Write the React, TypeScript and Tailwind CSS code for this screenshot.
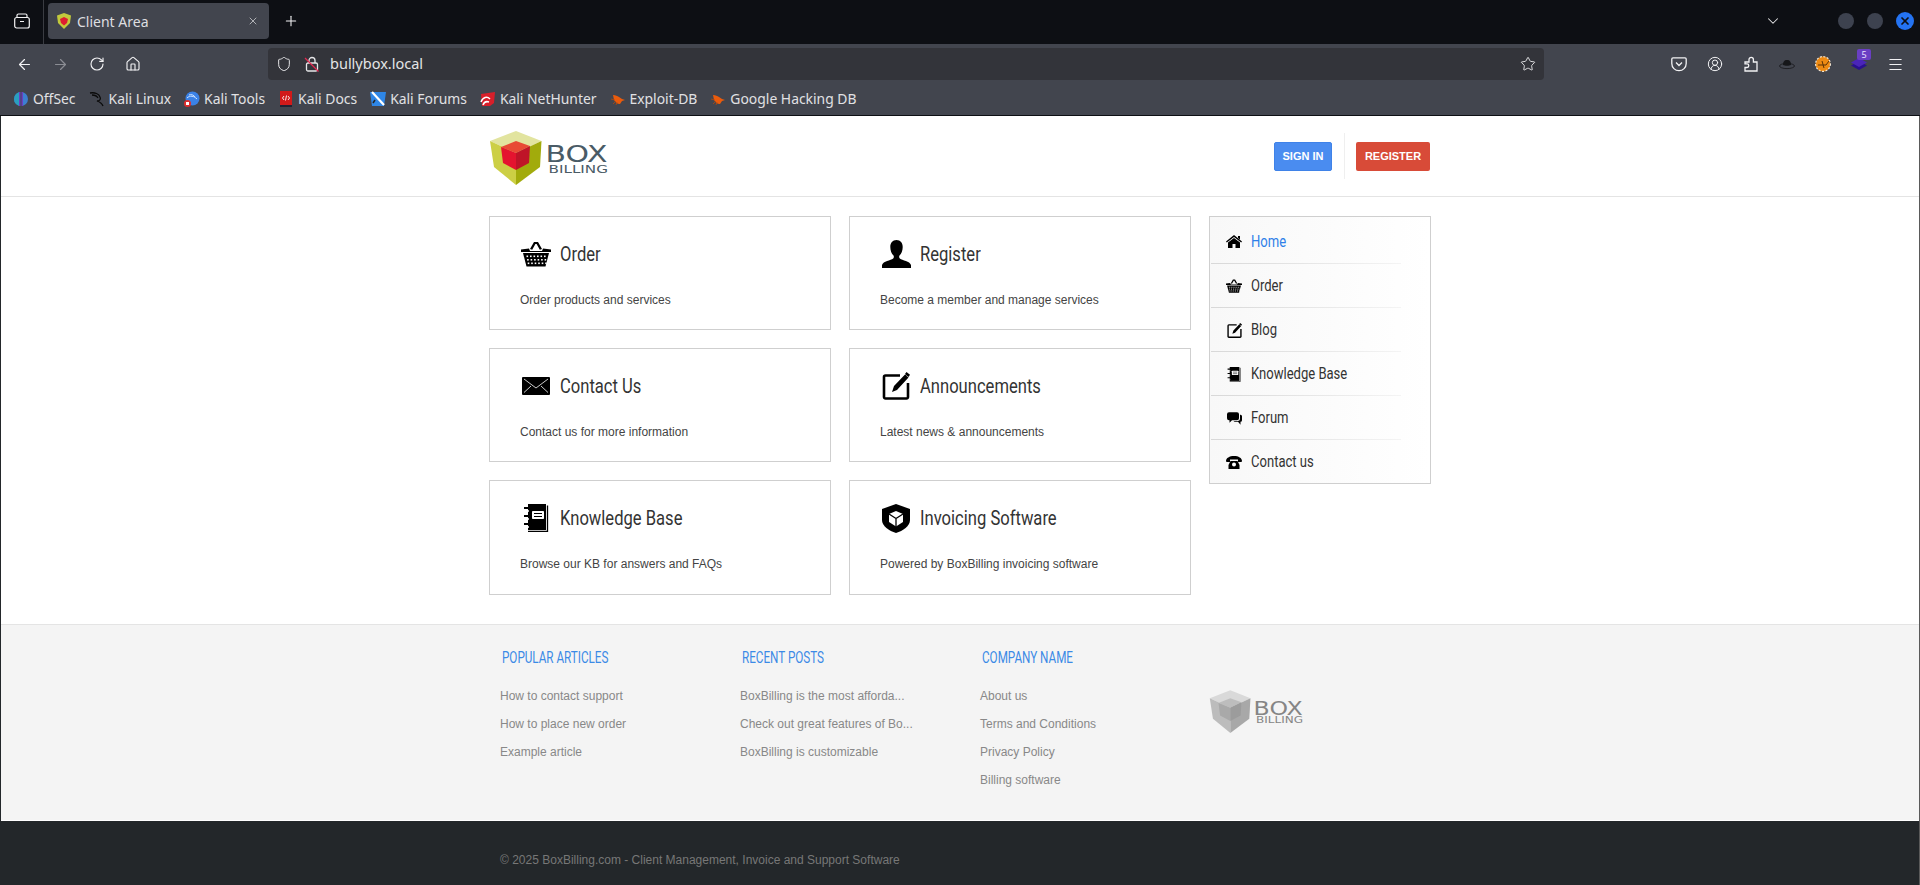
import React from "react";
import { ArrowLeft, ArrowRight, RotateCw, Home, Shield, Plus, X, ChevronDown, Star, Menu, CircleUserRound } from "lucide-react";

const UI = "font-['Noto_Sans','Open_Sans',sans-serif]";
const ARIAL = "font-['Liberation_Sans',Arial,sans-serif]";
const NARROW = "font-['Roboto',sans-serif] inline-block origin-left whitespace-nowrap";

function Logo({ grey, className }: { grey?: boolean; className: string }) {
  const c = grey
    ? { t: "#d9d9d9", l: "#bcbcbc", r: "#a8a8a8", it: "#bdbdbd", il: "#a9a9a9", ir: "#9c9c9c", x: "#858585" }
    : { t: "#e2e49f", l: "#cccf45", r: "#a2ab0c", it: "#e84a35", il: "#e4142f", ir: "#bf1428", x: "#4a5b66" };
  return (
    <svg viewBox="9 11 119 55" className={className}>
      <path d="M36 11 61.5 21 36 33 10 21Z" fill={c.t} />
      <path d="M10 21 36 33V65L14 47Z" fill={c.l} />
      <path d="M61.5 21 60 47 36 65V33Z" fill={c.r} />
      <path d="M36 21 50 26 36 33 21 27Z" fill={c.it} />
      <path d="M21 27 36 33V50L23 43Z" fill={c.il} />
      <path d="M50 26 49 43 36 50V33Z" fill={c.ir} />
      <text x="65.500" y="42" fontFamily="'DejaVu Sans',sans-serif" fontSize="23.5" fill={c.x} textLength="62" lengthAdjust="spacingAndGlyphs">BOX</text>
      <text x="68.500" y="52.500" fontFamily="'DejaVu Sans',sans-serif" fontSize="11" fill={c.x} textLength="59.500" lengthAdjust="spacingAndGlyphs">BILLING</text>
    </svg>
  );
}

function Basket({ className }: { className: string }) {
  return (
    <svg viewBox="0 0 30 26" className={className}>
      <path d="M9 8 13 1h4l4 7-2.2.8L15.6 3h-1.2L11.2 8.8Z" fill="#000" />
      <path d="M0 8.5 8 7.5 9 10h12l1-2.500 8 1V11H0Z" fill="#000" />
      <path d="M2 12h26l-3.500 13.500H5.500Z" fill="#000" />
      <g fill="#fff">
        {[14.5, 18, 21.5].map((y, r) =>
          [5.5, 9, 12.5, 16, 19.500, 23].map((x, i) => <rect key={`${r}${i}`} x={x + r * 0.6} y={y} width="1.6" height="1.600" />)
        )}
      </g>
    </svg>
  );
}
function Person({ className }: { className: string }) {
  return (
    <svg viewBox="0 0 29 28" className={className}>
      <path d="M14.500 0c4 0 6.200 3 6.200 7 0 3.500-1.300 6.800-3.200 8.500-.5.600-.5 2.200.3 3 2.500 2 10 2.500 11.200 6.500V28H0v-3c1.200-4 8.700-4.500 11.200-6.500.8-.8.8-2.400.3-3C9.600 13.800 8.300 10.500 8.300 7c0-4 2.200-7 6.200-7Z" fill="#000" />
    </svg>
  );
}
function Mail({ className }: { className: string }) {
  return (
    <svg viewBox="0 0 28 18" className={className}>
      <path d="M1 0h26a1 1 0 0 1 1 1v16a1 1 0 0 1-1 1H1a1 1 0 0 1-1-1V1a1 1 0 0 1 1-1Z" fill="#000" />
      <path d="M2 2 14 11 26 2M2 15.500 9 9M26 15.500 19 9" fill="none" stroke="#fff" strokeWidth=".8" />
    </svg>
  );
}
function Edit({ className }: { className: string }) {
  return (
    <svg viewBox="0 0 28 28" className={className}>
      <path d="M18 3.500H3.500A1.500 1.500 0 0 0 2 5v20a1.500 1.500 0 0 0 1.500 1.500h21A1.500 1.500 0 0 0 26 25V11" fill="none" stroke="#000" strokeWidth="2.600" />
      <path d="M10 20 12 14 23 2.500l2 1-1 .0 2.500 2L15 18Z" fill="#000" />
      <path d="M24.500 0 28 2.800 26.500 5 23 2Z" fill="#000" />
    </svg>
  );
}
function Notebook({ className }: { className: string }) {
  return (
    <svg viewBox="0 0 26 28" className={className}>
      <path d="M5 0h18v26H5Z" fill="#000" />
      <path d="M24.500 1.500V27.500H5" fill="none" stroke="#000" strokeWidth="1.300" />
      <rect x="9" y="7" width="12" height="8" rx=".8" fill="#fff" />
      <path d="M11 9.500h8M11 12.500h8" stroke="#000" strokeWidth="1" />
      <path d="M1 4h5M1 12h5M1 20h5" stroke="#000" strokeWidth="2" />
      <path d="M5 7h1M5 15h1M5 23h1" stroke="#fff" strokeWidth="1.500" />
    </svg>
  );
}
function ShieldCube({ className }: { className: string }) {
  return (
    <svg viewBox="0 0 28 29" className={className}>
      <path d="M14 0 28 5v11c0 6-7 11-14 13C7 27 0 22 0 16V5Z" fill="#000" />
      <path d="M14 7 21 10v8l-7 4.500L7 18v-8Z" fill="#fff" />
      <path d="M14 14.500 7 10M14 14.500l7-4.500M14 14.500V23" stroke="#000" strokeWidth="1.300" fill="none" />
    </svg>
  );
}
function HomeGlyph({ className }: { className: string }) {
  return (
    <svg viewBox="0 0 16 13" className={className}>
      <path d="M8 0 16 6.500l-.8 1L8 2 .8 7.500 0 6.500Z" fill="#000" />
      <path d="M12 1h2v3.500l-2-1.500Z" fill="#000" />
      <path d="M8 3 14 7.500V13H9.500V9h-3v4H2V7.500Z" fill="#000" />
    </svg>
  );
}
function Chat({ className }: { className: string }) {
  return (
    <svg viewBox="0 0 15 12.500" className={className}>
      <path d="M2 0h8a2 2 0 0 1 2 2v4a2 2 0 0 1-2 2H5L2.500 10.500V8H2a2 2 0 0 1-2-2V2a2 2 0 0 1 2-2Z" fill="#000" />
      <path d="M13 2.500h.5a1.500 1.500 0 0 1 1.500 1.500v4a1.500 1.500 0 0 1-1.500 1.500h0v3L11 9.500H6.500l1-.7h3a2.500 2.500 0 0 0 2.500-2.500Z" fill="#000" />
    </svg>
  );
}
function Phone({ className }: { className: string }) {
  return (
    <svg viewBox="0 0 16 13" className={className}>
      <path d="M0 5C0 2 3.500 0 8 0s8 2 8 5l-.5 1H12V3.500H4V6H.5Z" fill="#000" />
      <path d="M4.500 5h7l2 4v4h-11V9Z" fill="#000" />
      <circle cx="8" cy="8.500" r="2" fill="#fff" />
    </svg>
  );
}

const Bug = () => (
  <svg viewBox="0 0 16 16" className="size-4 shrink-0">
    <path d="M3 4c3 0 4 1 6 2l3 2 3 1-3 1-2 3c-3 0-5-2-6-4Z" fill="#ea5b0c" />
    <path d="M1 8l4 1M3 13l3-3M6 14l1-3" stroke="#b8480a" strokeWidth=".8" />
  </svg>
);

const bookmarks: [string, React.ReactNode][] = [
  ["OffSec", <svg viewBox="0 0 16 16" className="size-4 shrink-0"><circle cx="8" cy="8" r="7" fill="#3d7fd0" /><path d="M8 1a7 7 0 0 0 0 14" fill="#2a9fc0" /><path d="M6 1h4v14H6Z" fill="#6a3fc0" /><path d="M7.500 0h1v16h-1Z" fill="#42454e" /></svg>],
  ["Kali Linux", <svg viewBox="0 0 16 16" className="size-4 shrink-0"><path d="M1 2c5-1 9 1 10 4 1 2 0 4-3 4 3 1 5 2 6 5M3 4c3 0 5 1 6 3" fill="none" stroke="#0a0a0a" strokeWidth="1.300" /></svg>],
  ["Kali Tools", <svg viewBox="0 0 16 16" className="size-4 shrink-0"><circle cx="8.500" cy="7.500" r="7" fill="#3b82e6" /><path d="M3 7c3-3 7-2 10 1M5 4c2-1 5 0 6 2" fill="none" stroke="#cfe3ff" strokeWidth="1" /><rect x="0" y="9" width="7" height="7" rx="3.500" fill="#dd2c2c" /><path d="M2 11h3v3H2Z" fill="#fff" /></svg>],
  ["Kali Docs", <svg viewBox="0 0 16 16" className="size-4 shrink-0"><rect x="2" y="0" width="12" height="16" fill="#d11a1a" /><rect x="2" y="14" width="12" height="2" fill="#223" /><path d="M6 5 4.500 7 6 9M10 5l1.500 2L10 9M8.500 4.500 7.500 9.500" fill="none" stroke="#fff" strokeWidth=".9" /></svg>],
  ["Kali Forums", <svg viewBox="0 0 16 16" className="size-4 shrink-0"><path d="M0 1h16l-2 14H2Z" fill="#2e86e6" /><path d="M2 1l12 13" stroke="#fff" strokeWidth="2.200" /><path d="M5 9l-2 3" stroke="#222" strokeWidth="1.500" /></svg>],
  ["Kali NetHunter", <svg viewBox="0 0 16 16" className="size-4 shrink-0"><path d="M1 3 15 1l-1 11-4 3H2Z" fill="#d81f2a" /><path d="M1 11c2-5 6-6 9-3M3 14c1-3 3-4 6-3" fill="none" stroke="#fff" strokeWidth="1.500" /></svg>],
  ["Exploit-DB", <Bug />],
  ["Google Hacking DB", <Bug />],
];

function BrowserChrome() {
  return (
    <div className={`${UI} shrink-0 text-[#e7e7ea]`}>
      <div className="h-11 bg-[#0d0f14] flex items-center">
        <div className="w-[44px] h-11 flex items-center justify-center border-r border-[#3a3c42] pb-[2px]">
          <svg viewBox="0 0 16 16" className="size-4" fill="none" stroke="#f4f4f5" strokeWidth="1.200">
            <rect x=".7" y="4.500" width="14.600" height="10.500" rx="2" />
            <path d="M3 4.500V2.500a1.500 1.500 0 0 1 1.500-1.500h7A1.500 1.500 0 0 1 13 2.500v2M6 8.500h4" />
          </svg>
        </div>
        <div className="ml-[4px] mt-[-2px] w-[221px] h-9 rounded bg-[#42454e] flex items-center pl-2 pr-2.5 text-[14px]">
          <svg viewBox="0 0 16 16" className="size-4 shrink-0">
            <path d="M8 0 15 2.500 14 10l-6 6-6-6-1-7.500Z" fill="#c2c93c" />
            <path d="M8 4 12 6l-1 4-3 2.500L5 10 4 6Z" fill="#dd1c30" />
          </svg>
          <span className="ml-[5px] flex-1 text-[#dedee0]">Client Area</span>
          <X size={12} strokeWidth={1.500} color="#d5d5d8" />
        </div>
        <Plus size={16} strokeWidth={1.600} color="#f4f4f5" className="ml-3.5 mt-[-2px]" />
        <div className="flex-1" />
        <ChevronDown size={18} strokeWidth={1.400} color="#e6e6e8" className="mt-[-3px]" />
        <div className="ml-[56px] mt-[-2px] flex items-center gap-[13px] pr-[6px]">
          <span className="size-4 rounded-full bg-[#3d424f]" />
          <span className="size-4 rounded-full bg-[#3d424f]" />
          <span className="size-[18px] rounded-full bg-[#2473f2] flex items-center justify-center">
            <X size={12} strokeWidth={3.500} color="#0d0f14" />
          </span>
        </div>
      </div>
      <div className="h-10 bg-[#42454e] flex items-center pl-[16px] pr-[16px]">
        <ArrowLeft size={17} strokeWidth={1.700} color="#f2f2f4" />
        <ArrowRight size={17} strokeWidth={1.700} color="#8b8d94" className="ml-[19px]" />
        <RotateCw size={16} strokeWidth={1.700} color="#f2f2f4" className="ml-[20px]" />
        <Home size={16} strokeWidth={1.700} color="#f2f2f4" className="ml-[20px]" />
        <div className="ml-[127px] w-[1276px] shrink-0 h-8 rounded bg-[#33343a] flex items-center pl-2 pr-2 text-[14.500px]">
          <Shield size={16} strokeWidth={1.500} color="#e6e6e8" />
          <svg viewBox="0 0 16 16" className="size-4 ml-[12px]" fill="none">
            <rect x="2.500" y="7" width="11" height="8" rx="1.500" stroke="#e6e6e8" strokeWidth="1.300" />
            <path d="M5 7V4.500a3 3 0 0 1 6 0V7" stroke="#e6e6e8" strokeWidth="1.300" />
            <path d="M1 2 14.500 15.500" stroke="#e22850" strokeWidth="1.200" />
          </svg>
          <span className="ml-[10px] flex-1 text-[#e4e4e6]">bullybox.local</span>
          <Star size={16} strokeWidth={1.400} color="#e6e6e8" />
        </div>
        <div className="flex-1" />
        <div className="flex items-center gap-5 shrink-0">
          <svg viewBox="0 0 16 16" className="size-4" fill="none" stroke="#f2f2f4" strokeWidth="1.300">
            <path d="M2 1.800h12a1.200 1.200 0 0 1 1.200 1.200v4.500A7.200 7.200 0 0 1 .8 7.500V3A1.200 1.200 0 0 1 2 1.800Z" />
            <path d="M5 6.500 8 9.500l3-3" />
          </svg>
          <CircleUserRound size={16} strokeWidth={1.500} color="#f2f2f4" />
          <svg viewBox="0 0 16 16" className="size-4" fill="none" stroke="#f2f2f4" strokeWidth="1.300">
            <path d="M2 6h4V3.500a2.200 2.200 0 0 1 4.400 0V6H14v9H2v-3.500h2a1.800 1.800 0 0 0 0-3.600H2Z" />
          </svg>
          <svg viewBox="0 0 16 10" className="size-4">
            <ellipse cx="8" cy="7" rx="7.500" ry="2.600" fill="none" stroke="#16171a" strokeWidth=".8" />
            <path d="M4 6c0-3 1-5 4-5s4 2 4 5c-2 1-6 1-8 0Z" fill="#16171a" />
          </svg>
          <svg viewBox="0 0 16 16" className="size-4">
            <circle cx="8" cy="8" r="7.400" fill="#ee8a12" stroke="#f2e6d5" strokeWidth="1.200" strokeDasharray="2 1.500" />
            <path d="M3 9h8l3-4M7 5l2 7" stroke="#5b3207" strokeWidth="1" fill="none" />
          </svg>
          <div className="relative size-4">
            <svg viewBox="0 0 16 16" className="size-4">
              <path d="M8 5 16 9.500 8 14 0 9.500Z" fill="#29108f" />
              <path d="M8 2 16 6.500 8 11 0 6.500Z" fill="#4a25b8" />
            </svg>
            <span className="absolute left-[6px] top-[-7px] w-[14px] h-[11px] rounded-[2px] bg-[#6a3fc4] text-[9px] leading-[11px] text-center text-[#e8e0ff]">5</span>
          </div>
          <Menu size={17} strokeWidth={1.500} color="#f2f2f4" />
        </div>
      </div>
      <div className="h-[31px] bg-[#42454e] flex items-center pl-[13px] gap-[13px] text-[13.900px] border-b border-[#0d0f14] box-content">
        {bookmarks.map(([label, icon]) => (
          <div key={label} className="flex items-center gap-1 text-[#e1e1e4] whitespace-nowrap">
            {icon}
            <span>{label}</span>
          </div>
        ))}
      </div>
    </div>
  );
}

const cards: [string, string, React.ReactNode][] = [
  ["Order", "Order products and services", <Basket className="w-[30px] h-[26px]" />],
  ["Register", "Become a member and manage services", <Person className="w-[29px] h-7" />],
  ["Contact Us", "Contact us for more information", <Mail className="w-[28px] h-[18px]" />],
  ["Announcements", "Latest news & announcements", <Edit className="w-7 h-7" />],
  ["Knowledge Base", "Browse our KB for answers and FAQs", <Notebook className="w-[26px] h-7" />],
  ["Invoicing Software", "Powered by BoxBilling invoicing software", <ShieldCube className="w-7 h-[29px]" />],
];

const nav: [string, React.ReactNode][] = [
  ["Home", <HomeGlyph className="w-4 h-[13px]" />],
  ["Order", <Basket className="w-4 h-[14px]" />],
  ["Blog", <Edit className="w-[15px] h-[15px]" />],
  ["Knowledge Base", <Notebook className="w-[14px] h-[15px]" />],
  ["Forum", <Chat className="w-[15px] h-[13px]" />],
  ["Contact us", <Phone className="w-4 h-[13px]" />],
];

const footerCols: [string, string[]][] = [
  ["POPULAR ARTICLES", ["How to contact support", "How to place new order", "Example article"]],
  ["RECENT POSTS", ["BoxBilling is the most afforda...", "Check out great features of Bo...", "BoxBilling is customizable"]],
  ["COMPANY NAME", ["About us", "Terms and Conditions", "Privacy Policy", "Billing software"]],
];

export default function App() {
  return (
    <div className={`h-[885px] overflow-hidden flex flex-col bg-white ${ARIAL}`}>
      <BrowserChrome />
      <div className="flex-1 flex flex-col min-h-0 border-l border-l-[#23272a] border-r border-r-[#5a5a5a]">
        <header className="h-[81px] shrink-0 border-b border-[#e4e4e4]">
          <div className="w-[941px] ml-[488px] h-full flex items-center justify-between">
            <Logo className="w-[119px] h-[55px] mt-[5px]" />
            <div className="flex items-center">
              <span className="w-[58px] h-[29px] rounded-[2px] bg-[#4a8cf0] border border-[#3f82e8] text-white text-[11px] font-bold flex items-center justify-center">SIGN IN</span>
              <span className="w-px h-[46px] ml-[12px] mr-[11px] bg-[#efefef]" />
              <span className="w-[74px] h-[29px] rounded-[2px] bg-[#d84b38] text-white text-[11px] font-bold flex items-center justify-center">REGISTER</span>
            </div>
          </div>
        </header>
        <main className="flex-1 min-h-0 pl-[488px] pt-[19px] flex items-start gap-[18px]">
          <div className="w-[702px] grid grid-cols-2 gap-[18px] grid-rows-[114px_114px_115px]">
            {cards.map(([title, desc, icon]) => (
              <div key={title} className="border border-[#cfcfcf] pl-[30px] pt-[19px]">
                <div className="h-9 flex items-center">
                  <span className="w-[30px] ml-px flex justify-center shrink-0">{icon}</span>
                  <span className={`ml-[9px] text-[21px] leading-9 text-[#333] scale-x-[0.79] ${NARROW}`}>{title}</span>
                </div>
                <p className="mt-[19px] text-[12px] leading-[18px] text-[#444]">{desc}</p>
              </div>
            ))}
          </div>
          <nav className="w-[222px] h-[268px] border border-[#cfcfcf] bg-linear-to-r from-[#f8f8f8] to-white pl-px">
            {nav.map(([label, icon], i) => (
              <div key={label} className={`${i === 0 ? "h-[47px] pt-[2px]" : "h-11"} relative flex items-center`}>
                <span className="w-[38px] pl-[4px] flex justify-center shrink-0 ml-[2px]">{icon}</span>
                <span className={`text-[16px] scale-x-[0.815] ${i === 0 ? "text-[#2f80e8]" : "text-[#333]"} ${NARROW}`}>{label}</span>
                {i < 5 && <span className="absolute left-0 bottom-0 w-[190px] h-px bg-linear-to-r from-[#d8d8d8] to-[#f4f4f4]" />}
              </div>
            ))}
          </nav>
        </main>
        <footer className="h-[197px] shrink-0 border-t border-t-[#e4e4e4] border-b border-b-white bg-[#f4f4f4]">
          <div className="ml-[499px] flex pt-[21px]">
            {footerCols.map(([head, links]) => (
              <div key={head} className="w-[240px]">
                <h3 className={`ml-[2px] text-[16px] leading-6 text-[#3b8ae6] scale-x-[0.73] ${NARROW}`}>{head}</h3>
                <ul className="mt-[12px] text-[12px] text-[#888]">
                  {links.map((l) => (
                    <li key={l} className="h-7 leading-7">{l}</li>
                  ))}
                </ul>
              </div>
            ))}
            <Logo grey className="ml-[-11px] mt-[44px] w-[94px] h-[44px]" />
          </div>
        </footer>
        <div className="h-[64px] shrink-0 bg-[#23272a] pl-[499px] pt-[30px] text-[12px] leading-[18px] text-[#777]">
          © 2025 BoxBilling.com - Client Management, Invoice and Support Software
        </div>
      </div>
    </div>
  );
}
